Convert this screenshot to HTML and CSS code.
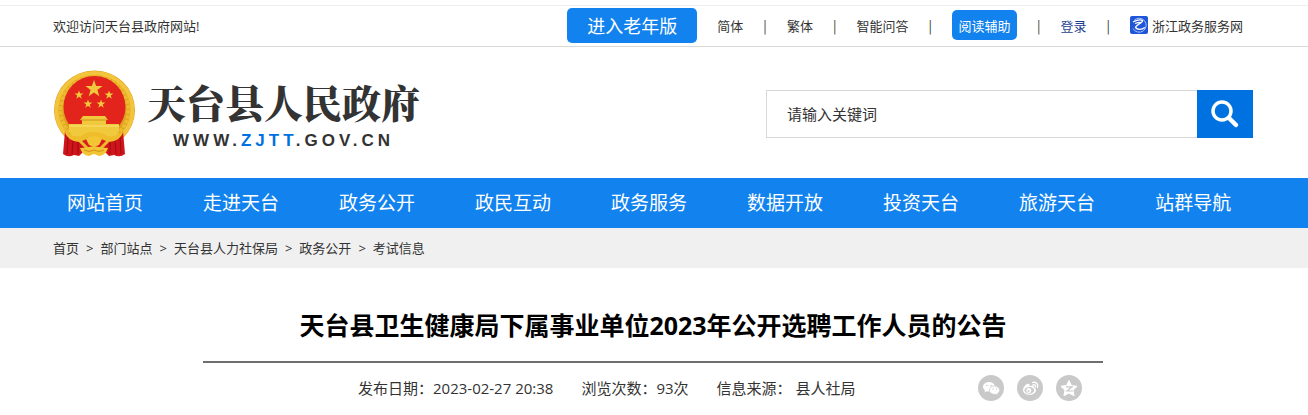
FILE: index.html
```html
<!DOCTYPE html>
<html lang="zh-CN">
<head>
  <meta charset="UTF-8">
  <meta name="viewport" content="width=device-width, initial-scale=1.0">
  <title>天台县卫生健康局下属事业单位2023年公开选聘工作人员的公告</title>
  <link rel="stylesheet" href="styles.css">
</head>
<body>

  <!-- 顶部工具栏 -->
  <div class="topbar">
    <div class="wrap topbar-inner">
      <span class="welcome">欢迎访问天台县政府网站!</span>
      <div class="tools">
        <button type="button" class="btn-old">进入老年版</button>
        <a href="#">简体</a>
        <span class="sep">|</span>
        <a href="#">繁体</a>
        <span class="sep">|</span>
        <a href="#">智能问答</a>
        <span class="sep">|</span>
        <button type="button" class="btn-read">阅读辅助</button>
        <span class="sep">|</span>
        <a href="#" class="login">登录</a>
        <span class="sep">|</span>
        <a href="#" class="service">
          <svg width="18" height="18" viewBox="0 0 18 18">
            <rect width="18" height="18" rx="2" fill="#1f55d8"/>
            <path d="M4 4.500a7 7 0 1 1-1 8" fill="none" stroke="#a9c1f5" stroke-width="1"/>
            <path d="M3 6c3-1.500 7-3 9.500-1.500c1 2-5 3.500-7 6.500c1 3 6 3 9.500.5M5 7.500c2-.8 4-1.300 5.500-1.200" fill="none" stroke="#fff" stroke-width="1.300"/>
          </svg>
          浙江政务服务网
        </a>
      </div>
    </div>
  </div>

  <!-- 网站标志和搜索 -->
  <div class="wrap header">
    <a href="#" class="logo">
      <svg class="emblem" width="84" height="88" viewBox="0 0 84 88">
        <defs>
          <path id="star" d="M0-10L2.400-3.200H9.500L3.800 1.200 5.900 8.100 0 4-5.900 8.100-3.800 1.200-9.500-3.200H-2.400z"/>
        </defs>
        <ellipse cx="41.500" cy="40" rx="40.500" ry="39.500" fill="#dca21d"/>
        <ellipse cx="41.500" cy="40" rx="38" ry="37" fill="none" stroke="#f3c53d" stroke-width="4"/>
        <ellipse cx="41.500" cy="40" rx="34" ry="33" fill="none" stroke="#ecb92f" stroke-width="4" stroke-dasharray="4 1"/>
        <ellipse cx="41.500" cy="37" rx="31" ry="31" fill="#e3241d"/>
        <g fill="#f0c93c">
          <use href="#star" transform="translate(41 19) scale(.9)"/>
          <use href="#star" transform="translate(26 25) scale(.46)"/>
          <use href="#star" transform="translate(56 25) scale(.46)"/>
          <use href="#star" transform="translate(35 34) scale(.46)"/>
          <use href="#star" transform="translate(48 34) scale(.46)"/>
          <path d="M30 46h22l3 4h-2v4h13v7q-3 6-8 8H24q-6-3-8-8v-7h13v-4h-2z"/>
        </g>
        <path d="M28 50h26" stroke="#d08f1a"/>
        <path d="M16 56h50" stroke="#fbe27a"/>
        <path d="M12 61L10 84q5 4 11 1l5 1 7-7h16l7 7 5-1q6 3 11-1L70 61q-6 8-15 8H27q-9 0-15-8z" fill="#cf151b"/>
        <path d="M15 67l-1 17M20 71l-1 13M25 72v12M67 67l1 17M62 71l1 13M57 72v12" stroke="#9b0d12"/>
        <path d="M11 60q8 8 17 6q4-4 13-4t13 4q9 2 17-6q-3 11-15 12l-6 6H32l-6-6q-12-1-15-12z" fill="#efbd2c"/>
        <path d="M29 71q12-7 24 0l-6 6H35z" fill="#d7201d"/>
        <path d="M33 69q8-6 16 0l-3 6-5 2-5-2z" fill="#f2c535"/>
        <path d="M27 78q7 0 14-2q7 2 14 2q-2 7-9 8l-5-2-5 2q-7-1-9-8z" fill="#f2c535"/>
        <path d="M31 80q5 3 10 0q5 3 10 0" fill="none" stroke="#d08f1a"/>
      </svg>
      <span class="logo-text">
        <strong class="logo-name">天台县人民政府</strong>
        <span class="logo-url">WWW.<em>ZJTT</em>.GOV.CN</span>
      </span>
    </a>
    <form class="search">
      <input type="text" aria-label="搜索关键词" placeholder="请输入关键词">
      <button type="submit" aria-label="搜索">
        <svg width="30" height="30" viewBox="0 0 30 30" fill="none" stroke="#fff">
          <circle cx="12" cy="12" r="9" stroke-width="3.500"/>
          <path d="M19 19l7 7" stroke-width="4.500" stroke-linecap="round"/>
        </svg>
      </button>
    </form>
  </div>

  <!-- 主导航 -->
  <nav class="nav">
    <div class="wrap">
      <ul>
        <li><a href="#">网站首页</a></li>
        <li><a href="#">走进天台</a></li>
        <li><a href="#">政务公开</a></li>
        <li><a href="#">政民互动</a></li>
        <li><a href="#">政务服务</a></li>
        <li><a href="#">数据开放</a></li>
        <li><a href="#">投资天台</a></li>
        <li><a href="#">旅游天台</a></li>
        <li><a href="#">站群导航</a></li>
      </ul>
    </div>
  </nav>

  <!-- 当前位置 -->
  <div class="crumbs">
    <div class="wrap crumbs-inner">
      <a href="#">首页</a><span>&gt;</span>
      <a href="#">部门站点</a><span>&gt;</span>
      <a href="#">天台县人力社保局</a><span>&gt;</span>
      <a href="#">政务公开</a><span>&gt;</span>
      <a href="#">考试信息</a>
    </div>
  </div>

  <!-- 正文 -->
  <div class="wrap">
    <div class="article">
      <h1>天台县卫生健康局下属事业单位2023年公开选聘工作人员的公告</h1>
      <div class="meta">
        <span>发布日期：2023-02-27 20:38</span>
        <span>浏览次数：93次</span>
        <span>信息来源： 县人社局</span>
        <div class="share">
          <a href="#" aria-label="微信">
            <svg width="26" height="26" viewBox="0 0 26 26">
              <circle cx="13" cy="13" r="13" fill="#c9c9c9"/>
              <path d="M11 7c-3.500 0-6 2.200-6 4.800 0 1.500.8 2.800 2 3.600l-.5 2 2.200-1.100c.8.200 1.500.3 2.300.3 3.300 0 6-2.200 6-4.800S14.300 7 11 7z" fill="#fff"/>
              <path d="M16.500 11c-3 0-5.200 1.900-5.200 4.200s2.200 4.200 5.200 4.200c.6 0 1.200-.1 1.700-.2l2 1-.5-1.800c1.200-.8 1.900-1.900 1.900-3.200 0-2.300-2.200-4.200-5.100-4.200z" fill="#fff" stroke="#c9c9c9" stroke-width=".8"/>
              <g fill="#c9c9c9"><circle cx="9" cy="10.500" r=".8"/><circle cx="13" cy="10.500" r=".8"/><circle cx="15" cy="14" r=".7"/><circle cx="18.500" cy="14" r=".7"/></g>
            </svg>
          </a>
          <a href="#" aria-label="微博">
            <svg width="26" height="26" viewBox="0 0 26 26">
              <circle cx="13" cy="13" r="13" fill="#c9c9c9"/>
              <path d="M12 9c-2-1.500-6 3-6 6 0 2.800 3 4.800 6.500 4.800 4 0 6.500-2.400 6.500-4.600 0-1.700-1.300-2.300-2.200-2.500.8-2.200-.8-2.900-4.200-1.800 0-.8.100-1.500-.6-1.900z" fill="#fff"/>
              <ellipse cx="12.300" cy="15.300" rx="4.800" ry="3.400" fill="#c9c9c9"/>
              <circle cx="11.800" cy="15.600" r="2.500" fill="#fff"/>
              <circle cx="11.500" cy="16" r="1" fill="#c9c9c9"/>
              <path d="M15.500 7.500c3.500-1 6 1.500 5 5M16 9.800c1.800-.4 2.900.8 2.500 2.200" fill="none" stroke="#fff" stroke-width="1.300" stroke-linecap="round"/>
            </svg>
          </a>
          <a href="#" aria-label="QQ空间">
            <svg width="26" height="26" viewBox="0 0 26 26">
              <circle cx="13" cy="13" r="13" fill="#c9c9c9"/>
              <path d="M13 5.500l2.500 5.100 5.600.7-4.100 3.900 1.100 5.500-5.100-2.700-5.100 2.700 1.100-5.500-4.100-3.900 5.600-.7z" fill="#fff" stroke="#fff" stroke-linejoin="round"/>
              <path d="M10 11.800h6l-5 4.200h6" fill="none" stroke="#c9c9c9" stroke-width="1.200"/>
            </svg>
          </a>
        </div>
      </div>
    </div>
  </div>

</body>
</html>
```
FILE: styles.css
```css
* {
  box-sizing: border-box;
}

body {
  margin: 0;
  font-family: "Open Sans", "Noto Sans CJK SC", sans-serif;
  font-size: 13px;
  color: #333;
  background: #fff;
}

a {
  color: inherit;
  text-decoration: none;
}

button {
  border: 0;
  padding: 0;
  font-family: inherit;
  color: #fff;
  background: #1282ee;
  cursor: pointer;
}

svg {
  display: block;
}

.wrap {
  max-width: 1202px;
  margin: 0 auto;
  padding-right: 2px;
}

/* 顶部工具栏 */
.topbar {
  margin-top: 5px;
  border-top: 1px solid #eee;
  border-bottom: 1px solid #d8d8d8;
}

.topbar-inner {
  display: flex;
  justify-content: space-between;
  align-items: center;
  height: 40px;
  padding-bottom: 2px;
}

.tools {
  display: flex;
  align-items: center;
  gap: 20px;
  padding-right: 10px;
  white-space: nowrap;
}

.btn-old {
  width: 130px;
  height: 35px;
  border-radius: 5px;
  font-size: 18px;
}

.btn-read {
  width: 65px;
  height: 30px;
  border-radius: 5px;
  font-size: 13px;
}

.sep {
  font-family: "Noto Sans CJK SC", sans-serif;
}

.login {
  color: #1f3f8f;
}

.service {
  display: flex;
  align-items: center;
  gap: 4px;
}

/* 标志和搜索 */
.header {
  display: flex;
  justify-content: space-between;
  align-items: center;
  height: 131px;
  padding-top: 3px;
}

.logo {
  display: flex;
  align-items: center;
  gap: 10px;
}

.logo-text {
  display: flex;
  flex-direction: column;
  align-items: center;
  padding-top: 6px;
}

.logo-name {
  font-family: "Noto Serif CJK SC", "Noto Sans CJK SC", serif;
  font-size: 39px;
  line-height: 48px;
  font-weight: 900;
}

.logo-url {
  font-family: "Liberation Sans", Arial, sans-serif;
  font-size: 17px;
  line-height: 32px;
  font-weight: bold;
  letter-spacing: 4px;
}

.logo-url em {
  font-style: normal;
  color: #0071e0;
}

.search {
  display: flex;
  width: 487px;
  height: 48px;
}

.search input {
  flex: 1;
  min-width: 0;
  padding: 0 20px;
  border: 1px solid #d8d8d8;
  border-right: 0;
  font-family: inherit;
  font-size: 15px;
  color: #333;
}

.search input::placeholder {
  color: #333;
}

.search button {
  display: flex;
  justify-content: center;
  align-items: center;
  width: 56px;
  background: #0071e0;
}

/* 主导航 */
.nav {
  background: #1282ee;
}

.nav ul {
  display: flex;
  margin: 0 -16px;
  padding: 0;
  list-style: none;
}

.nav a {
  display: block;
  padding: 0 30px;
  font-size: 19px;
  line-height: 50px;
  color: #fff;
  white-space: nowrap;
}

/* 当前位置 */
.crumbs {
  background: #f0f0f0;
}

.crumbs-inner {
  display: flex;
  gap: 7px;
  line-height: 40px;
}

/* 正文 */
.article {
  max-width: 900px;
  margin: 0 auto;
}

h1 {
  margin: 0;
  padding: 38px 0 16px;
  border-bottom: 2px solid #6e6e6e;
  font-size: 25px;
  line-height: 39px;
  text-align: center;
  color: #000;
}

.meta {
  display: flex;
  align-items: center;
  gap: 28px;
  padding-left: 155px;
  padding-right: 21px;
  font-size: 15px;
  line-height: 50px;
}

.share {
  display: flex;
  gap: 13px;
  margin-left: auto;
}
```
